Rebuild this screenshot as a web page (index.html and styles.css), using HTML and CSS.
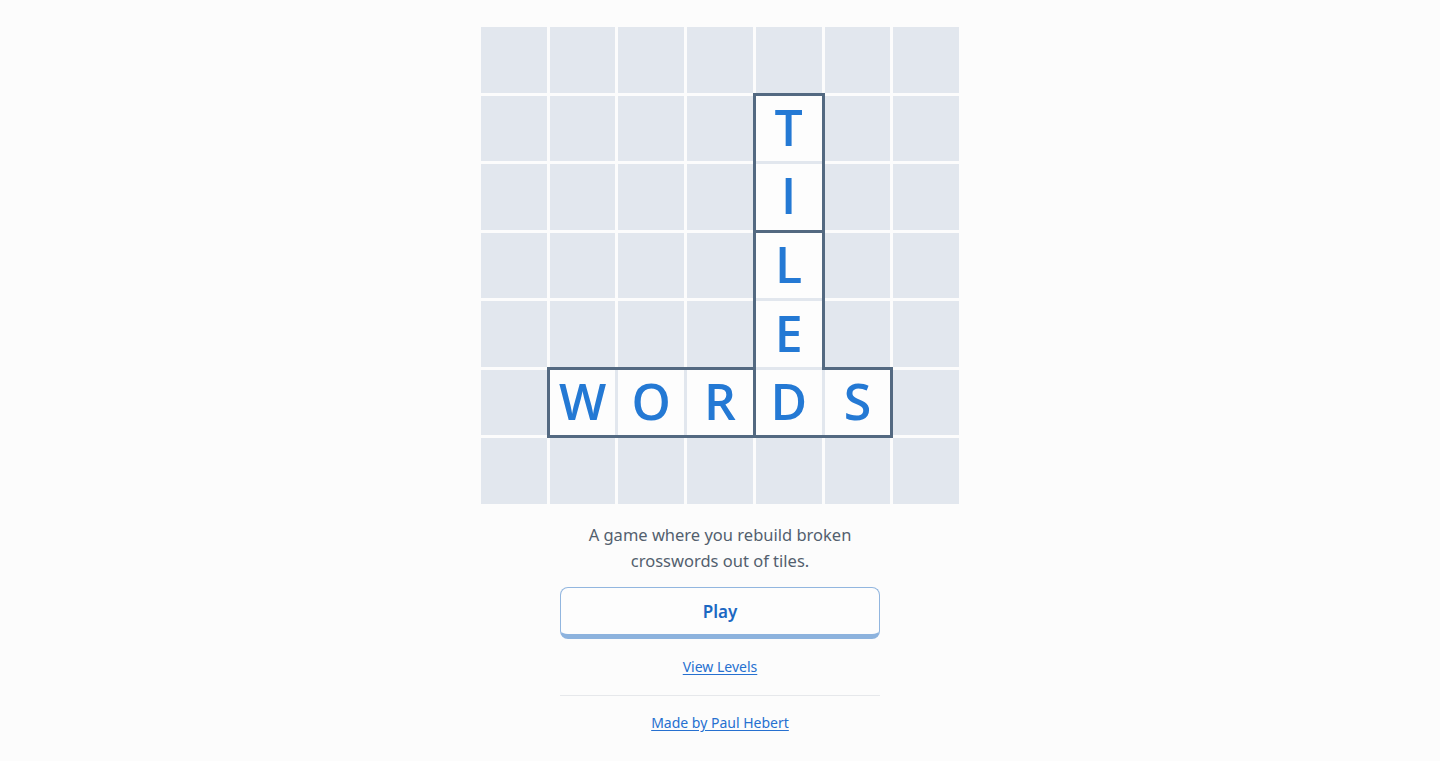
FILE: index.html
```html
<!DOCTYPE html>
<html lang="en">
<head>
<meta charset="utf-8">
<title>Tiles</title>
<link rel="stylesheet" href="styles.css">
</head>
<body>
<main class="page">
  <div class="board">
    <div class="cell"></div><div class="cell"></div><div class="cell"></div><div class="cell"></div><div class="cell"></div><div class="cell"></div><div class="cell"></div>
    <div class="cell"></div><div class="cell"></div><div class="cell"></div><div class="cell"></div><div class="cell tile t l r">T</div><div class="cell"></div><div class="cell"></div>
    <div class="cell"></div><div class="cell"></div><div class="cell"></div><div class="cell"></div><div class="cell tile l r b">I</div><div class="cell"></div><div class="cell"></div>
    <div class="cell"></div><div class="cell"></div><div class="cell"></div><div class="cell"></div><div class="cell tile t l r">L</div><div class="cell"></div><div class="cell"></div>
    <div class="cell"></div><div class="cell"></div><div class="cell"></div><div class="cell"></div><div class="cell tile l r">E</div><div class="cell"></div><div class="cell"></div>
    <div class="cell"></div><div class="cell tile t l b">W</div><div class="cell tile t b">O</div><div class="cell tile t b r">R</div><div class="cell tile l b">D</div><div class="cell tile t r b">S</div><div class="cell"></div>
    <div class="cell"></div><div class="cell"></div><div class="cell"></div><div class="cell"></div><div class="cell"></div><div class="cell"></div><div class="cell"></div>
  </div>
  <section class="intro">
    <p class="tagline">A game where you rebuild broken crosswords out of tiles.</p>
    <button class="play" type="button">Play</button>
    <a class="link levels" href="#">View Levels</a>
    <hr class="divider">
    <a class="link credit" href="#">Made by Paul Hebert</a>
  </section>
</main>
</body>
</html>
```
FILE: styles.css
```css
html, body {
  margin: 0;
  padding: 0;
  background: #fcfcfc;
}
body {
  font-family: "Noto Sans", "Open Sans", sans-serif;
  color: #535f6e;
}
.page {
  display: flex;
  flex-direction: column;
  align-items: center;
  padding-top: 27px;
}
.board {
  width: 478px;
  height: 477px;
  display: grid;
  grid-template-columns: repeat(7, 1fr);
  grid-template-rows: repeat(7, 1fr);
  gap: 3px;
}
.cell {
  background: #e2e7ee;
}
.tile {
  position: relative;
  background: #fdfdfd;
  box-shadow: 0 0 0 3px #e2e7ee;
  display: flex;
  align-items: center;
  justify-content: center;
  font-family: "Open Sans", "Noto Sans", sans-serif;
  font-size: 50px;
  font-weight: 600;
  color: #2479d4;
  line-height: 1;
  padding-bottom: 3px;
  box-sizing: border-box;
}
.tile::before {
  content: "";
  position: absolute;
  inset: -3px;
  border: 0 solid #536981;
  z-index: 1;
  pointer-events: none;
}
.tile.t::before { border-top-width: 3px; }
.tile.b::before { border-bottom-width: 3px; }
.tile.l::before { border-left-width: 3px; }
.tile.r::before { border-right-width: 3px; }

.intro {
  width: 320px;
  display: flex;
  flex-direction: column;
  align-items: center;
}
.tagline {
  margin: 18px 0 0;
  width: 290px;
  text-align: center;
  font-size: 16.5px;
  line-height: 26px;
  color: #535f6e;
}
.play {
  margin-top: 13px;
  width: 320px;
  height: 52px;
  box-sizing: border-box;
  background: #fdfdfd;
  border: 1px solid #92b6df;
  border-bottom: 5px solid #8db3de;
  border-radius: 8px;
  font-family: "Noto Sans", sans-serif;
  font-size: 17px;
  font-weight: 600;
  color: #1b68c2;
  cursor: pointer;
}
.link {
  color: #2670d0;
  font-size: 14px;
  line-height: 20px;
  text-decoration: underline;
  text-underline-offset: 2px;
}
.levels {
  margin-top: 18px;
}
.divider {
  width: 320px;
  margin: 18px 0 0;
  border: 0;
  border-top: 1px solid #e6e8eb;
}
.credit {
  margin-top: 17px;
}
```
